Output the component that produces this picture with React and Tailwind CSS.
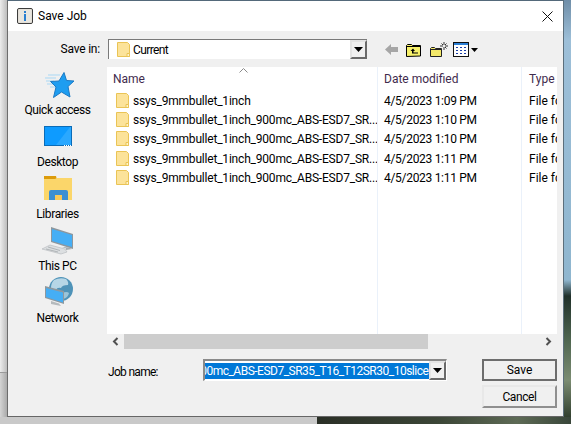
import React from 'react'

const rows = [
  ['ssys_9mmbullet_1inch', '4/5/2023 1:09 PM'],
  ['ssys_9mmbullet_1inch_900mc_ABS-ESD7_SR...', '4/5/2023 1:10 PM'],
  ['ssys_9mmbullet_1inch_900mc_ABS-ESD7_SR...', '4/5/2023 1:10 PM'],
  ['ssys_9mmbullet_1inch_900mc_ABS-ESD7_SR...', '4/5/2023 1:11 PM'],
  ['ssys_9mmbullet_1inch_900mc_ABS-ESD7_SR...', '4/5/2023 1:11 PM'],
]

function FolderIcon() {
  return (
    <svg width="15" height="17" viewBox="0 0 15 17" className="shrink-0">
      <path d="M1.500 1.500h10l2 2v12h-12z" fill="#fce39a" stroke="#eac455" />
      <path d="M11 12.500h2.500v3H11z" fill="#fff3cc" stroke="#eac455" />
    </svg>
  )
}

function InfoIcon() {
  return (
    <svg width="16" height="16" viewBox="0 0 16 16">
      <rect x="0.500" y="0.500" width="15" height="15" rx="1.500" fill="#dcd8cf" stroke="#3c3c3c" />
      <rect x="1.500" y="1.500" width="13" height="13" fill="#e9e6df" />
      <rect x="7" y="3" width="2" height="2" fill="#2a7fd0" />
      <rect x="7" y="6" width="2" height="7" fill="#2a7fd0" />
    </svg>
  )
}

function CloseIcon() {
  return (
    <svg width="11" height="11" viewBox="0 0 11 11">
      <path d="M0.500 0.500l10 10M10.500 0.500l-10 10" stroke="#111" strokeWidth="1" fill="none" />
    </svg>
  )
}

function ComboArrow() {
  return (
    <div className="flex h-full w-[17px] shrink-0 items-center justify-center border-2 border-t-[#e4e4e4] border-l-[#e4e4e4] border-r-[#6a6a6a] border-b-[#6a6a6a] bg-[#f0f0f0]">
      <svg width="9" height="5" viewBox="0 0 9 5">
        <path d="M0 0h9L4.500 5z" fill="#000" />
      </svg>
    </div>
  )
}

function BackIcon() {
  return (
    <svg width="13" height="11" viewBox="0 0 13 11">
      <path d="M6 0v3h7v5H6v3L0 5.500z" fill="#a6a6a6" />
    </svg>
  )
}

function UpFolderIcon() {
  return (
    <svg width="16" height="15" viewBox="0 0 16 15">
      <path d="M0.500 14.500v-11l1-1h4l1 1h8v10.500z" fill="#f6f06a" stroke="#000" />
      <path d="M1 4h14v1H1z" fill="#000" />
      <path d="M7 6.500L4.500 9H6v2.500h6v-1H7.500V9H9z" fill="#000" />
    </svg>
  )
}

function NewFolderIcon() {
  return (
    <svg width="18" height="15" viewBox="0 0 18 15">
      <path d="M0.500 14.500v-8l1-1h3l1 1h6v8z" fill="#f4e96a" stroke="#222" />
      <path d="M1 7h10v1H1z" fill="#222" />
      <path d="M14 0v3M14 5v3M10 4h3M15 4h3M11.500 1.500l1.500 1.500M16.500 1.500L15 3M16.500 6.500L15 5" stroke="#333" strokeWidth="1" fill="none" />
    </svg>
  )
}

function ViewsIcon() {
  return (
    <svg width="26" height="15" viewBox="0 0 26 15">
      <rect x="0.500" y="0.500" width="15" height="14" fill="#fff" stroke="#111" />
      <rect x="1" y="1" width="14" height="2" fill="#2b7fd6" />
      <path d="M3 5h2v1H3zM7 5h2v1H7zM11 5h2v1h-2zM3 8h2v1H3zM7 8h2v1H7zM11 8h2v1h-2zM3 11h2v1H3zM7 11h2v1H7zM11 11h2v1h-2z" fill="#1b3fa8" />
      <path d="M18 6h7l-3.500 4z" fill="#000" />
    </svg>
  )
}

function QuickAccessIcon() {
  return (
    <svg width="32" height="32" viewBox="0 0 32 32">
      <path d="M6 7h12M3 10h11M4 13h8M5 16h7M8 19h5" stroke="#a9d8f5" strokeWidth="1" fill="none" />
      <path d="M22 4.500l2.500 8 7.500.5-6 5.500 2 10.500-8.500-5-8 5.500 2.500-10.500-5.500-5.500 8.500-.5z" fill="#1e9df0" stroke="#1b79c4" strokeWidth="1" />
    </svg>
  )
}

function DesktopIcon() {
  return (
    <svg width="32" height="32" viewBox="0 0 32 32">
      <rect x="2" y="6" width="28" height="20" fill="#0e9bff" />
      <path d="M14 25L28 7h2v18z" fill="#2aa8ff" />
      <path d="M2 6h28v1H2zM2 25h28v1H2zM2 6h1v20H2zM29 6h1v20h-1z" fill="#0a6cb8" />
      <path d="M22 25h1v1h-1zM24 25h1v1h-1zM26 25h1v1h-1zM28 25h1v1h-1z" fill="#fff" />
    </svg>
  )
}

function LibrariesIcon() {
  return (
    <svg width="32" height="32" viewBox="0 0 32 32">
      <path d="M2 4h12l1 4H2z" fill="#dc9b0b" />
      <path d="M2 7h11l2-1h15v22H2z" fill="#fbd66a" />
      <path d="M7 28V20q0-2 2-2h15q2 0 2 2v8h-6v-5h-7v5z" fill="#3b8fd2" />
      <path d="M13 23h7v5h-7z" fill="#f7c95a" />
    </svg>
  )
}

function PcIcon() {
  return (
    <svg width="32" height="32" viewBox="0 0 32 32">
      <path d="M9 3l22 7v15L9 18z" fill="#8d979e" />
      <path d="M10 5l20 6v12L10 17z" fill="#45aef5" />
      <path d="M20 23l4 1.500v1.500l6-1-3-1.500z" fill="#a5acb1" />
      <path d="M8 21l15 4 2 3-6 2L0 25z" fill="#dcdfe1" stroke="#a9adb0" strokeWidth="0.500" />
      <path d="M6 23l12 3.500M4 25l12 3" stroke="#b0b4b7" strokeWidth="1" fill="none" />
    </svg>
  )
}

function NetworkIcon() {
  return (
    <svg width="32" height="32" viewBox="0 0 32 32">
      <circle cx="19" cy="13" r="12" fill="#4f93b8" />
      <path d="M12 4q6-3 12-1 3 3 2 6-6 0-7 3-4-1-5 2-3-1-5-2 0-5 3-8z" fill="#b6d6e6" />
      <path d="M20 17q5-2 7 0-1 5-6 6-2-3-1-6z" fill="#9cc4d8" />
      <path d="M3 10l19 5v13L3 22z" fill="#8e989e" />
      <path d="M4 12l17 4.500v10L4 21z" fill="#45aef5" />
      <path d="M9 25l8 2.500 2 2.500-10-2z" fill="#b5babd" />
    </svg>
  )
}

const places = [
  { label: 'Quick access', Icon: QuickAccessIcon },
  { label: 'Desktop', Icon: DesktopIcon },
  { label: 'Libraries', Icon: LibrariesIcon },
  { label: 'This PC', Icon: PcIcon },
  { label: 'Network', Icon: NetworkIcon },
]

export default function App() {
  return (
    <div className="flex h-[424px] w-[571px] flex-col overflow-hidden bg-[#d8d8d8] text-[12px] leading-4 text-black [font-family:Roboto,sans-serif]">
      <div className="flex h-[417px] shrink-0">
        <div className="flex w-[7px] shrink-0 flex-col">
          <div className="h-[372px] bg-gradient-to-r from-[#ececec] to-[#bdbdbd]" />
          <div className="h-px bg-[#9a9a9a]" />
          <div className="flex-1 bg-gradient-to-r from-[#d4d4d4] to-[#aaaaaa]" />
        </div>

        <div className="flex w-[557px] shrink-0 flex-col border border-t-[#53697a] border-r-[#5c6f7c] border-b-[#666666] border-l-[#6c6c6c] bg-[#f0f0f0]">
          <div className="flex h-[30px] shrink-0 items-center bg-white pr-[10px] pl-[9px]">
            <InfoIcon />
            <span className="ml-[5px]">Save Job</span>
            <div className="ml-auto flex">
              <CloseIcon />
            </div>
          </div>

          <div className="flex h-[36px] shrink-0 items-start pt-[8px]">
            <span className="w-[92px] pt-[2px] text-right tracking-[-0.2px]">Save in:</span>
            <div className="ml-2 flex h-[20px] w-[259px] items-center border-t border-l border-t-[#7a7a7a] border-l-[#7a7a7a] bg-white pl-[7px]">
              <FolderIcon />
              <span className="ml-[2px] tracking-[-0.6px]">Current</span>
              <div className="ml-auto h-full">
                <ComboArrow />
              </div>
            </div>
            <div className="ml-[18px] flex h-[20px] items-center">
              <BackIcon />
              <div className="ml-[8px]"><UpFolderIcon /></div>
              <div className="ml-[8px]"><NewFolderIcon /></div>
              <div className="ml-[5px]"><ViewsIcon /></div>
            </div>
          </div>

          <div className="flex h-[282px] shrink-0">
            <div className="flex w-[99px] shrink-0 flex-col">
              {places.map(({ label, Icon }) => (
                <div key={label} className="flex h-[52px] shrink-0 flex-col items-center justify-end pb-px">
                  <Icon />
                  <span className="mt-[2px] whitespace-nowrap tracking-[-0.4px]">{label}</span>
                </div>
              ))}
            </div>

            <div className="flex w-[450px] shrink-0 flex-col">
              <div className="flex h-[267px] bg-white">
                <div className="relative w-[271px] shrink-0 overflow-hidden border-r border-r-[#eaf1fa]">
                  <svg width="9" height="5" viewBox="0 0 9 5" className="absolute top-[1px] left-[132px]">
                    <path d="M0.500 4.500l4-4 4 4" fill="none" stroke="#8a8a8a" />
                  </svg>
                  <div className="flex h-[24px] items-center pl-[6px] text-[#3f2b4d]">Name</div>
                  {rows.map(([name], i) => (
                    <div key={i} className="flex h-[19.200px] items-center pl-[8px] whitespace-nowrap">
                      <FolderIcon />
                      <span className="ml-[3px] pt-px tracking-[-0.2px]">{name}</span>
                    </div>
                  ))}
                </div>
                <div className="w-[144px] shrink-0 overflow-hidden border-r border-r-[#eaf1fa]">
                  <div className="flex h-[24px] items-center pl-[6px] text-[#3f2b4d]">Date modified</div>
                  {rows.map(([, date], i) => (
                    <div key={i} className="flex h-[19.200px] items-center pt-px pl-[6px] tracking-[-0.3px] whitespace-nowrap">{date}</div>
                  ))}
                </div>
                <div className="min-w-0 flex-1 overflow-hidden">
                  <div className="flex h-[24px] items-center pl-[7px] text-[#3f2b4d]">Type</div>
                  {rows.map((_, i) => (
                    <div key={i} className="flex h-[19.200px] items-center pt-px pl-[7px] whitespace-nowrap">File folder</div>
                  ))}
                </div>
              </div>

              <div className="flex h-[15px] shrink-0 items-center bg-[#f0f0f0]">
                <div className="flex w-[17px] shrink-0 justify-center">
                  <svg width="7" height="9" viewBox="0 0 7 9">
                    <path d="M5.500 1L2 4.500 5.500 8" fill="none" stroke="#505050" strokeWidth="2" />
                  </svg>
                </div>
                <div className="h-full w-[304px] bg-[#cdcdcd]" />
                <div className="ml-auto flex w-[17px] justify-center">
                  <svg width="7" height="9" viewBox="0 0 7 9">
                    <path d="M1.500 1L5 4.500 1.500 8" fill="none" stroke="#505050" strokeWidth="2" />
                  </svg>
                </div>
              </div>
            </div>
          </div>

          <div className="flex flex-1 items-start pt-[10px] pl-[100px]">
            <span className="w-[95px] shrink-0 pt-[5px] tracking-[-0.7px]">Job name:</span>
            <div className="flex h-[22px] w-[244px] shrink-0 items-stretch border-t-2 border-r border-b border-l-2 border-t-[#8a8a8a] border-r-white border-b-white border-l-[#8a8a8a]">
              <div className="flex min-w-0 flex-1 items-center justify-end overflow-hidden bg-white">
                <span className="-mr-[5px] shrink-0 bg-[#0078d7] tracking-[-0.5px] whitespace-nowrap text-white">900mc_ABS-ESD7_SR35_T16_T12SR30_10slices</span>
              </div>
              <ComboArrow />
            </div>
            <div className="ml-[35px] flex w-[75px] shrink-0 flex-col">
              <button className="h-[22px] border-2 border-[#6d6d6d] bg-[#f0f0f0]">Save</button>
              <button className="mt-[4px] h-[23px] border-2 border-t-[#e8e8e8] border-r-[#8f8f8f] border-b-[#8f8f8f] border-l-[#e8e8e8] bg-[#f0f0f0] tracking-[-0.4px]">Cancel</button>
            </div>
          </div>
        </div>

        <div className="w-[7px] shrink-0 bg-[linear-gradient(to_bottom,#6f8ea8_0,#9dbfd8_40px,#8fb6cf_280px,#20302a_296px,#4f6650_340px,#7b8c72_380px,#32402f_417px)]" />
      </div>

      <div className="flex flex-1">
        <div className="w-[317px] shrink-0 bg-[#c9c9c9]" />
        <div className="flex-1 bg-[linear-gradient(to_right,#2a2f26_0,#3b4536_120px,#5d6a55_200px,#39463a_254px)]" />
      </div>
    </div>
  )
}
